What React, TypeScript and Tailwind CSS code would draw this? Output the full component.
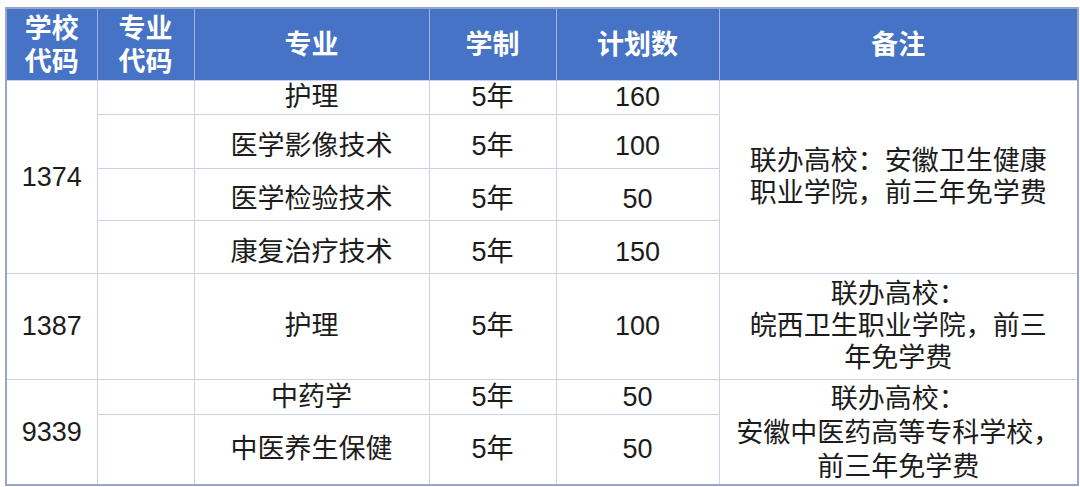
import React from 'react';

interface MajorRow {
    name: string;
    years: string;
    plan: number;
    h: string;
}

interface SchoolBlock {
    code: string;
    rows: MajorRow[];
    note: string[];
    noteLead: string;
}

const blocks: SchoolBlock[] = [
    {
        code: '1374',
        rows: [
            { name: '护理', years: '5年', plan: 160, h: 'h-[34px]' },
            { name: '医学影像技术', years: '5年', plan: 100, h: 'h-[54px] [&>td:not([rowspan])]:pt-[10px]' },
            { name: '医学检验技术', years: '5年', plan: 50, h: 'h-[52px] [&>td:not([rowspan])]:pt-[10px]' },
            { name: '康复治疗技术', years: '5年', plan: 150, h: 'h-[53px] [&>td:not([rowspan])]:pt-[10px]' },
        ],
        note: ['联办高校：安徽卫生健康', '职业学院，前三年免学费'],
        noteLead: 'leading-[32px]',
    },
    {
        code: '1387',
        rows: [{ name: '护理', years: '5年', plan: 100, h: 'h-[106px]' }],
        note: ['联办高校：', '皖西卫生职业学院，前三', '年免学费'],
        noteLead: 'leading-[32px]',
    },
    {
        code: '9339',
        rows: [
            { name: '中药学', years: '5年', plan: 50, h: 'h-[35px]' },
            { name: '中医养生保健', years: '5年', plan: 50, h: 'h-[70px]' },
        ],
        note: ['联办高校：', '安徽中医药高等专科学校，', '前三年免学费'],
        noteLead: 'leading-[34px] pt-[2px]',
    },
];

const cell = 'border border-[#c9d1ec] text-center align-middle p-0 whitespace-nowrap';
const head = 'border-x border-x-[#9fb4e2] bg-[#4673c6] text-white font-bold text-center align-middle p-0 pt-[3px] leading-[33px]';

export default function App() {
    return (
        <div className="min-h-screen bg-white pt-[7px] pl-[5px] font-['Liberation_Sans','Noto_Sans_CJK_SC',sans-serif] text-[27px] text-[#1c1c1c]">
            <table className="table-fixed border-collapse border-2 border-[#97a6cb] w-[1072px]">
                <colgroup>
                    <col className="w-[91px]" />
                    <col className="w-[97px]" />
                    <col className="w-[235px]" />
                    <col className="w-[127px]" />
                    <col className="w-[163px]" />
                    <col className="w-[359px]" />
                </colgroup>
                <thead>
                    <tr className="h-[72px]">
                        <th className={head}>学校<br />代码</th>
                        <th className={head}>专业<br />代码</th>
                        <th className={head}>专业</th>
                        <th className={head}>学制</th>
                        <th className={head}>计划数</th>
                        <th className={head}>备注</th>
                    </tr>
                </thead>
                <tbody>
                    {blocks.map((b) =>
                        b.rows.map((r, i) => (
                            <tr key={b.code + r.name} className={r.h}>
                                {i === 0 && (
                                    <td rowSpan={b.rows.length} className={cell + ' leading-[30px]'}>
                                        {b.code}
                                    </td>
                                )}
                                <td className={cell + ' leading-[30px]'}></td>
                                <td className={cell + ' leading-[30px]'}>{r.name}</td>
                                <td className={cell + ' leading-[30px]'}>{r.years}</td>
                                <td className={cell + ' leading-[30px]'}>{r.plan}</td>
                                {i === 0 && (
                                    <td rowSpan={b.rows.length} className={cell + ' ' + b.noteLead}>
                                        {b.note.map((line) => (
                                            <div key={line}>{line}</div>
                                        ))}
                                    </td>
                                )}
                            </tr>
                        ))
                    )}
                </tbody>
            </table>
        </div>
    );
}
